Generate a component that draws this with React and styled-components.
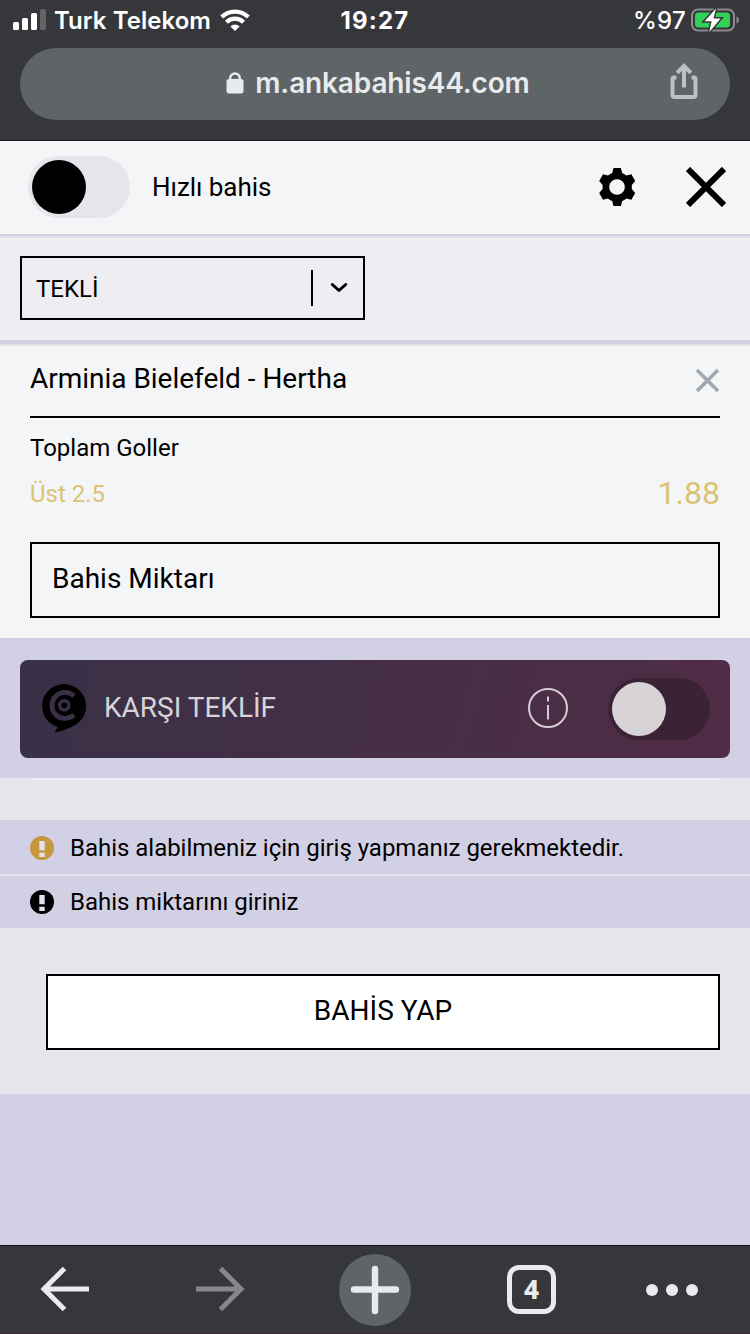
import React, { useState } from 'react';
import styled, { createGlobalStyle } from 'styled-components';

const App = () => {

  const [quickBet, setQuickBet] = useState(false);
  const [counterOffer, setCounterOffer] = useState(false);

  return (
    <>
      <GlobalStyle />
      <Screen>
        <BrowserTop>
          <StatusBar>
            <StatusLeft>
              <SignalIcon />
              <Carrier>Turk Telekom</Carrier>
              <WifiIcon />
            </StatusLeft>
            <Clock>19:27</Clock>
            <StatusRight>
              <Percent>%97</Percent>
              <BatteryIcon />
            </StatusRight>
          </StatusBar>
          <AddressBar>
            <LockIcon />
            <Address>m.ankabahis44.com</Address>
            <ShareButton><ShareIcon /></ShareButton>
          </AddressBar>
        </BrowserTop>

        <Header>
          <Toggle onClick={() => setQuickBet(!quickBet)}>
            <Knob $on={quickBet} />
          </Toggle>
          <QuickLabel>Hızlı bahis</QuickLabel>
          <IconButton><GearIcon /></IconButton>
          <IconButton><CrossIcon size={40} width={6} color="#000" /></IconButton>
        </Header>

        <TypeRow>
          <Select>
            <SelectText>TEKLİ</SelectText>
            <SelectArrow><ChevronIcon /></SelectArrow>
          </Select>
        </TypeRow>

        <BetCard>
          <MatchRow>
            <MatchName>Arminia Bielefeld - Hertha</MatchName>
            <IconButton><CrossIcon size={25} width={3.6} color="#a2a8af" /></IconButton>
          </MatchRow>
          <Market>Toplam Goller</Market>
          <PickRow>
            <Pick>Üst 2.5</Pick>
            <Odds>1.88</Odds>
          </PickRow>
          <Amount>Bahis Miktarı</Amount>
        </BetCard>

        <OfferArea>
          <Offer>
            <OfferLabel>
              <OfferLogo />
              <OfferText>KARŞI TEKLİF</OfferText>
              <InfoIcon />
            </OfferLabel>
            <Toggle $dark onClick={() => setCounterOffer(!counterOffer)}>
              <Knob $dark $on={counterOffer} />
            </Toggle>
          </Offer>
        </OfferArea>

        <Spacer />

        <Notice $height={54}>
          <WarnIcon color="#c6983d" />
          <NoticeText>Bahis alabilmeniz için giriş yapmanız gerekmektedir.</NoticeText>
        </Notice>
        <Notice $height={52}>
          <WarnIcon color="#000" />
          <NoticeText>Bahis miktarını giriniz</NoticeText>
        </Notice>

        <SubmitArea>
          <Submit>BAHİS YAP</Submit>
        </SubmitArea>

        <BrowserBottom>
          <NavItem><ArrowIcon color="#e8eaed" /></NavItem>
          <NavItem><ArrowIcon color="#868789" flip /></NavItem>
          <NavItem><NewTab><PlusIcon /></NewTab></NavItem>
          <NavItem><TabCount>4</TabCount></NavItem>
          <NavItem><MoreDots><i /><i /><i /></MoreDots></NavItem>
        </BrowserBottom>
      </Screen>
    </>
  );
};

export default App;

const SignalIcon = () => (
  <svg width="34" height="22" viewBox="0 0 34 22" fill="#fff">
    <rect x="0" y="13" width="6" height="8" rx="1.5" />
    <rect x="9" y="9" width="6" height="12" rx="1.5" />
    <rect x="18" y="4" width="6" height="17" rx="1.5" />
    <rect x="27" y="0" width="6" height="21" rx="1.5" fill="#636467" />
  </svg>
);

const WifiIcon = () => (
  <svg width="30" height="22" viewBox="0 0 30 22">
    <g fill="none" stroke="#fff" strokeWidth="4.2">
      <path d="M1.7 8.100a19 19 0 0 1 26.600 0" />
      <path d="M6.500 13.200a12 12 0 0 1 17 0" />
    </g>
    <path d="M15 22l-4.600-4.600a6.600 6.600 0 0 1 9.200 0z" fill="#fff" />
  </svg>
);

const BatteryIcon = () => (
  <svg width="48" height="26" viewBox="1 0 48 26">
    <rect x="2" y="2.5" width="42" height="21" rx="6" fill="none" stroke="#8b8c8f" strokeWidth="2" />
    <path d="M46.500 9.500c2 .8 2.500 2 2.500 3.500s-.5 2.700-2.500 3.500z" fill="#8b8c8f" />
    <rect x="5" y="5.500" width="35" height="15" rx="3.500" fill="#31d158" />
    <path d="M26 1.500L14.500 14.200h7.100L19.300 25 30.700 11.500h-7.200z" fill="#fff" stroke="#36373b" strokeWidth="3" paintOrder="stroke" />
  </svg>
);

const LockIcon = () => (
  <svg width="18" height="22" viewBox="0 0 18 22">
    <path d="M4.200 10V6.300a4.800 4.800 0 0 1 9.600 0V10" fill="none" stroke="#e8eaed" strokeWidth="2.400" />
    <rect x=".5" y="7" width="17" height="14.500" rx="2.500" fill="#e8eaed" />
  </svg>
);

const ShareIcon = () => (
  <svg width="30" height="38" viewBox="0 0 30 38" fill="none" stroke="#bdc1c6" strokeWidth="4">
    <path d="M7.500 15.500H5q-1.500 0-1.500 1.500V33q0 2 2 2h19q2 0 2-2V17q0-1.500-1.500-1.500H22.500" />
    <path d="M15 25.500V4M8.200 10.800L15 3.800l6.800 7" />
  </svg>
);

const GearIcon = () => (
  <svg width="38" height="40" viewBox="0 0 38 40">
    <path
      fillRule="evenodd"
      d="M15.500 1h7.400l1.300 5q2.500 1 4.200 2.500l5-1.200 3.800 6.600-3.400 4.100v4l3.400 4.100-3.800 6.600-5-1.200q-1.700 1.500-4.200 2.500l-1.300 5h-7.400l-1.300-5q-2.500-1-4.200-2.500l-5 1.200-3.800-6.600 3.400-4.100v-4l-3.400-4.100 3.800-6.600 5 1.200q1.700-1.500 4.200-2.500zM19 12.200a7.800 7.800 0 1 0 .01 0z"
    />
  </svg>
);

const CrossIcon = ({ size, width, color }) => (
  <svg width={size} height={size} viewBox={`0 0 ${size} ${size}`} stroke={color} strokeWidth={width}>
    <path d={`M2 2L${size - 2} ${size - 2}M${size - 2} 2L2 ${size - 2}`} />
  </svg>
);

const ChevronIcon = () => (
  <svg width="18" height="12" viewBox="0 0 18 12" fill="none" stroke="#000" strokeWidth="3" strokeLinecap="round" strokeLinejoin="round">
    <path d="M2.300 2.500L9 8.500l6.700-6" />
  </svg>
);

// speech bubble with the "C" target inside
const OfferLogo = () => (
  <svg width="44" height="49" viewBox="0 0 44 49">
    <circle cx="22" cy="22" r="22" fill="#000" />
    <path d="M44 21.500c0 14-12 23.500-32 27q3.500-3.500 4-7z" fill="#000" />
    <path d="M32 12.100a13 13 0 1 0 0 18.600" fill="none" stroke="#3a3046" strokeWidth="4.800" />
    <circle cx="22.300" cy="21.300" r="4.600" fill="none" stroke="#3a3046" strokeWidth="3.400" />
  </svg>
);

const InfoIcon = () => (
  <svg width="40" height="40" viewBox="0 0 40 40" fill="none" stroke="#d4ccd3" strokeWidth="2">
    <circle cx="20" cy="20" r="19" />
    <path d="M20 8.500v5M20 17v14.500" />
  </svg>
);

const WarnIcon = ({ color }) => (
  <svg width="24" height="24" viewBox="0 0 24 24">
    <circle cx="12" cy="12" r="12" fill={color} />
    <path d="M9.300 5h5.400v9.300H9.300zM9.300 16.800h5.400V21H9.300z" fill="#e4e1ef" />
  </svg>
);

const ArrowIcon = ({ color, flip }) => (
  <svg width="50" height="46" viewBox="0 0 50 46" fill="none" stroke={color} strokeWidth="5">
    <path d={flip ? 'M1 23h45M25.500 2.500L46 23 25.500 43.500' : 'M49 23H4M24.500 2.500L4 23l20.500 20.500'} />
  </svg>
);

const PlusIcon = () => (
  <svg width="50" height="50" viewBox="0 0 50 50" stroke="#e8eaed" strokeWidth="6.400" strokeLinecap="round">
    <path d="M4 24.500h42M25 4v42" />
  </svg>
);

const GlobalStyle = createGlobalStyle`
  body {
    margin: 0;
    background: #d2d0e4;
  }

  * {
    box-sizing: border-box;
  }

  svg {
    display: block;
    flex-shrink: 0;
  }
`

const Screen = styled.div`
  display: flex;
  flex-direction: column;
  width: 750px;
  height: 1334px;
  overflow: hidden;
  background: #d2d0e4;
  color: #000;
  font-family: Roboto, sans-serif;
  white-space: nowrap;
`;

const BrowserTop = styled.div`
  height: 141px;
  flex-shrink: 0;
  background: #36373b;
  border-bottom: 1px solid #17131b;
  font-family: Inter, sans-serif;
`;

const StatusBar = styled.div`
  display: grid;
  grid-template-columns: 1fr auto 1fr;
  align-items: center;
  height: 40px;
  padding: 0 11px 0 13px;
  color: #fff;
  font-size: 24px;
`;

const StatusLeft = styled.div`
  display: flex;
  align-items: center;
`;

const StatusRight = styled.div`
  display: flex;
  align-items: center;
  justify-content: flex-end;
  gap: 5px;
`;

const Carrier = styled.span`
  margin: 0 9px 0 7px;
  font-weight: 600;
  letter-spacing: 0.05px;
`;

const Clock = styled.span`
  margin-left: -2px;
  font-weight: 700;
  letter-spacing: 1.2px;
`;

const Percent = styled.span`
  font-weight: 500;
  letter-spacing: 0.3px;
`;

const AddressBar = styled.div`
  position: relative;
  display: flex;
  align-items: center;
  justify-content: center;
  gap: 11px;
  height: 72px;
  margin: 8px 20px 0;
  padding: 0 0 3px 6px;
  border-radius: 36px;
  background: #5f6467;
`;

const Address = styled.span`
  color: #e8eaed;
  font-size: 28px;
  font-weight: 600;
  letter-spacing: -0.15px;
`;

const ShareButton = styled.div`
  position: absolute;
  right: 31px;
  top: 14px;
`;

const Header = styled.div`
  display: flex;
  align-items: center;
  height: 97px;
  flex-shrink: 0;
  padding: 0 24px 3px 28px;
  background: #f4f5f7;
  border-bottom: 2px solid #e0e0e5;
  box-shadow: inset 0 -2px 0 #d2d0e4;
`;

const Toggle = styled.div`
  width: 102px;
  height: 62px;
  padding: 4px;
  border-radius: 31px;
  background: ${({ $dark }) => ($dark ? '#3b2335' : '#e5e6eb')};
`;

const Knob = styled.div`
  width: 54px;
  height: 54px;
  margin-left: ${({ $on }) => ($on ? '40px' : '0')};
  border-radius: 50%;
  background: ${({ $dark }) => ($dark ? '#d8d3d7' : '#000')};
`;

const QuickLabel = styled.span`
  flex: 1;
  margin-left: 22px;
  font-size: 26px;
  letter-spacing: -0.05px;
`;

const IconButton = styled.div`
  ${Header} & + & {
    margin-left: 50px;
  }
`;

const TypeRow = styled.div`
  height: 102px;
  flex-shrink: 0;
  padding: 18px 20px;
  background: #eeedf2;
`;

const Select = styled.div`
  display: flex;
  align-items: center;
  width: 345px;
  height: 64px;
  border: 2px solid #000;
`;

const SelectText = styled.span`
  flex: 1;
  padding: 2px 0 0 14px;
  font-size: 24px;
`;

const SelectArrow = styled.div`
  display: flex;
  align-items: center;
  justify-content: center;
  width: 52px;
  height: 36px;
  padding-left: 2px;
  border-left: 2px solid #000;
`;

const BetCard = styled.div`
  height: 294px;
  flex-shrink: 0;
  margin-top: 4px;
  padding: 0 30px;
  background: #f4f5f7;
  border-top: 2px solid #e5e6e8;
`;

const MatchRow = styled.div`
  display: flex;
  align-items: center;
  justify-content: space-between;
  height: 72px;
  padding-bottom: 2px;
  border-bottom: 2px solid #000;
  box-shadow: 0 2px 0 #fff;
`;

const MatchName = styled.span`
  padding-bottom: 4px;
  font-size: 28px;
  letter-spacing: -0.02px;
`;

const Market = styled.div`
  padding-top: 12px;
  font-size: 24px;
  line-height: 36px;
`;

const PickRow = styled.div`
  display: flex;
  align-items: center;
  justify-content: space-between;
  height: 54px;
  color: #dac473;
`;

const Pick = styled.span`
  padding-top: 2px;
  font-size: 24px;
`;

const Odds = styled.span`
  font-size: 32px;
`;

const Amount = styled.div`
  height: 76px;
  margin-top: 22px;
  padding-left: 20px;
  border: 2px solid #000;
  font-size: 28px;
  line-height: 70px;
`;

const OfferArea = styled.div`
  height: 140px;
  flex-shrink: 0;
  padding: 22px 20px 20px;
`;

const Offer = styled.div`
  display: flex;
  align-items: center;
  height: 98px;
  padding: 0 20px 0 22px;
  border-radius: 8px;
  background: linear-gradient(105deg, #393147, #512c46);
`;

const OfferLabel = styled.div`
  display: flex;
  flex: 1;
  align-items: center;
  margin-right: 40px;
  padding-bottom: 2px;
`;

const OfferText = styled.span`
  flex: 1;
  margin-left: 18px;
  padding-bottom: 2px;
  color: #d8d3d7;
  font-size: 28px;
`;

const Spacer = styled.div`
  height: 42px;
  flex-shrink: 0;
  background: #e5e6eb;

  &::before {
    content: '';
    display: block;
    height: 2px;
    margin: 0 30px;
    background: #efeff3;
  }
`;

const Notice = styled.div`
  display: flex;
  align-items: center;
  height: ${({ $height }) => $height}px;
  flex-shrink: 0;
  padding: 2px 30px 0;

  & + & {
    height: ${({ $height }) => $height + 2}px;
    padding-top: 0;
    border-top: 2px solid #e5e6eb;
  }
`;

const NoticeText = styled.span`
  margin-left: 16px;
  font-size: 24px;
  letter-spacing: -0.02px;
`;

const SubmitArea = styled.div`
  height: 166px;
  flex-shrink: 0;
  padding: 46px 30px 44px 46px;
  background: #e5e6eb;
`;

const Submit = styled.div`
  height: 76px;
  border: 2px solid #000;
  background: #fff;
  font-size: 28px;
  line-height: 70px;
  text-align: center;
`;

const BrowserBottom = styled.div`
  display: grid;
  grid-template-columns: 130px 180px 130px 183px 98px;
  align-items: center;
  height: 89px;
  flex-shrink: 0;
  margin-top: auto;
  background: #36373b;
  border-top: 1px solid #17131b;
  border-bottom: 1px solid #3a2a38;
`;

const NavItem = styled.div`
  display: flex;
  justify-content: center;

  > svg {
    margin-bottom: 2px;
  }
`;

const NewTab = styled.div`
  display: flex;
  align-items: center;
  justify-content: center;
  width: 72px;
  height: 72px;
  border-radius: 50%;
  background: #5f6467;
`;

const TabCount = styled.div`
  width: 49px;
  height: 49px;
  border: 5px solid #e8eaed;
  border-radius: 12px;
  color: #e8eaed;
  font-family: "Noto Sans", sans-serif;
  font-size: 26px;
  font-weight: 800;
  line-height: 39px;
  text-align: center;
`;

const MoreDots = styled.div`
  display: flex;
  gap: 8px;

  > i {
    width: 12px;
    height: 12px;
    border-radius: 50%;
    background: #e8eaed;
  }
`;
